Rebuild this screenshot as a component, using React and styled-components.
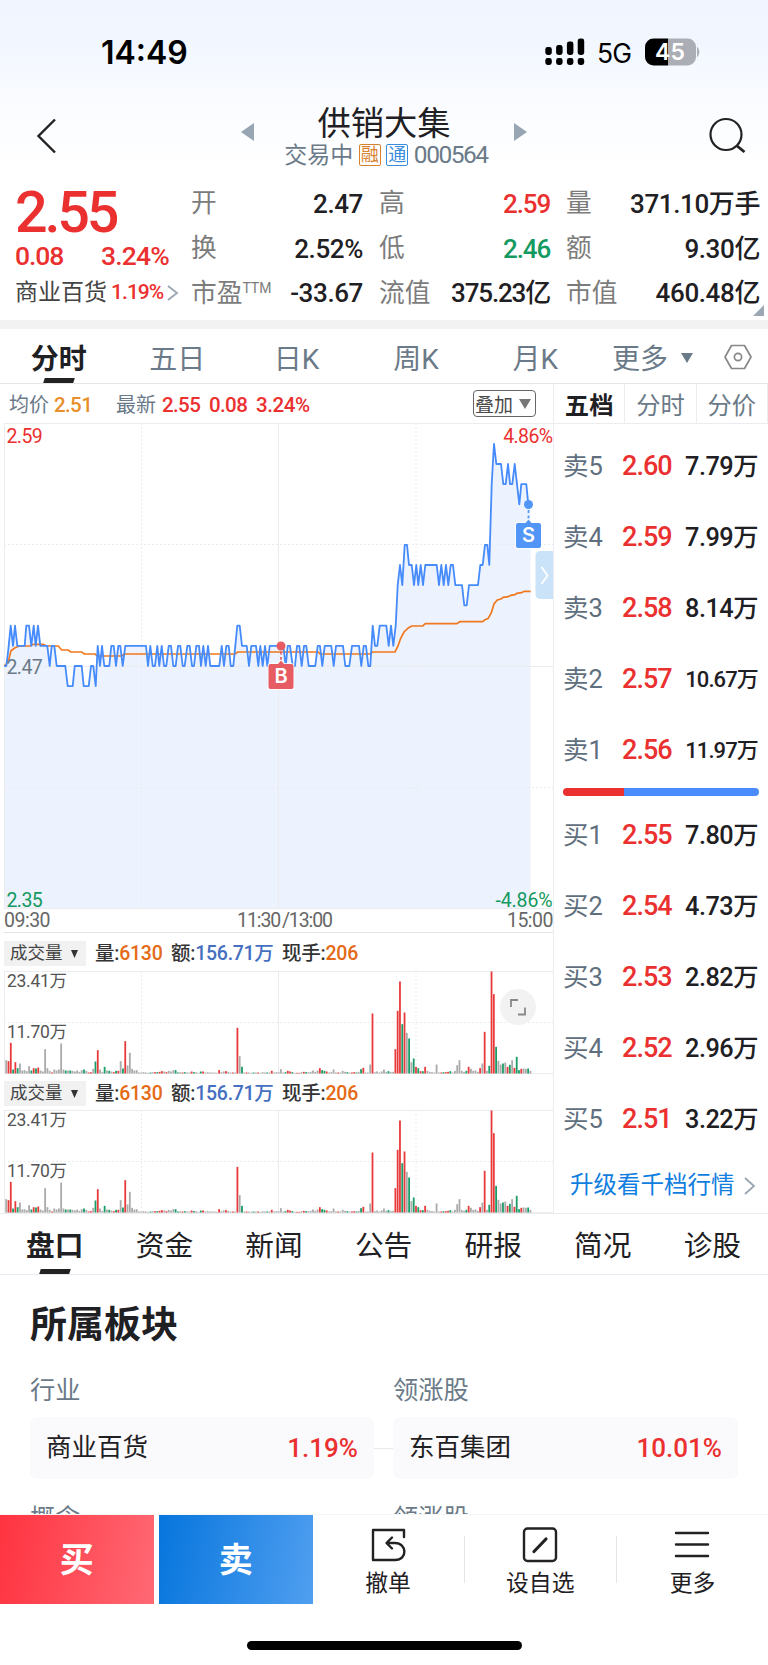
import React from 'react';
import styled, { createGlobalStyle } from 'styled-components';

const Global = createGlobalStyle`
  * { box-sizing: border-box; }
  body { margin: 0; background: #fff; }
`;

const RED = '#eb3030';
const GREEN = '#149a60';
const INK = '#1f2023';
const SLATE = '#6b7a88';
const GRAY = '#7c7c7c';
const LINE = '#eaecef';

const Screen = styled.div`
  width: 768px;
  height: 1665px;
  overflow: hidden;
  display: flex;
  flex-direction: column;
  background: #fff;
  color: ${INK};
  font-family: Roboto, 'Noto Sans CJK SC', sans-serif;
  white-space: nowrap;
`;

const Text = styled.span`
  font-size: ${(p) => p.$size || 24}px;
  font-weight: ${(p) => p.$weight || 400};
  color: ${(p) => p.$color || INK};
  letter-spacing: ${(p) => p.$ls ?? 0}em;
  line-height: 1;
`;

const TopArea = styled.header`
  height: 175px;
  background: linear-gradient(#f0f5ff 0, #f1f6ff 35px, #f9fbff 95px, #fff 170px);
`;

const StatusBar = styled.div`
  height: 100px;
  padding: 4px 66px 0 101px;
  display: flex;
  align-items: center;
  justify-content: space-between;
  font-family: Inter, sans-serif;
  color: #000;
`;

const Clock = styled.span`
  font-size: 32px;
  font-weight: 600;
  letter-spacing: 0;
  margin-top: 1px;
`;

const StatusIcons = styled.div`
  display: flex;
  align-items: center;
`;

const Network = styled.span`
  font-size: 26.5px;
  letter-spacing: -1px;
  margin: 2px 14px 0 12px;
`;

const NavBar = styled.div`
  height: 75px;
  display: flex;
  justify-content: space-between;
  padding: 0 22px 0 36px;
`;

const NavIcon = styled.svg`
  margin-top: 17px;
`;

const TitleGroup = styled.div`
  display: flex;
  gap: 28px;
  margin-left: 1px;
`;

const TitleColumn = styled.div`
  width: 204px;
  display: flex;
  flex-direction: column;
  align-items: center;
`;

const StockName = styled.h1`
  margin: 6px 0 0;
  font-size: 33.3px;
  line-height: 36px;
  font-weight: 400;
`;

const StockMeta = styled.div`
  display: flex;
  align-items: center;
  height: 26px;
  margin-left: 4px;
  gap: 5.5px;
`;

const Badge = styled.span`
  width: 22px;
  height: 22px;
  border: 1px solid ${(p) => p.$color};
  border-radius: 2px;
  background: #fff;
  color: ${(p) => p.$color};
  font-size: 18px;
  line-height: 19px;
  display: flex;
  justify-content: center;
`;

const Quote = styled.section`
  height: 145px;
  padding: 7px 8px 0 15px;
  display: flex;
  position: relative;
`;

const QuoteMain = styled.div`
  width: 176px;
`;

const BigPrice = styled.div`
  height: 61px;
  line-height: 61px;
  font-size: 57.5px;
  font-weight: 500;
  letter-spacing: -0.055em;
  color: ${RED};
`;

const ChangeRow = styled.div`
  width: 154px;
  height: 27px;
  display: flex;
  justify-content: space-between;
  align-items: center;
`;

const SectorRow = styled.div`
  height: 45px;
  display: flex;
  align-items: center;
  gap: 4px;
`;

const StatColumn = styled.dl`
  margin: 0 ${(p) => p.$gap || 0}px 0 0;
  width: ${(p) => p.$width}px;
`;

const Stat = styled.div`
  height: 44.6px;
  display: flex;
  align-items: center;
  justify-content: space-between;
`;

const StatLabel = styled(Text).attrs({ as: 'dt', $size: 25.7, $color: GRAY })``;

const StatValue = styled(Text).attrs({ as: 'dd', $size: 26, $weight: 500 })`
  margin: 0;
`;

const Sup = styled.sup`
  font-size: 14px;
  line-height: 0;
  vertical-align: 9px;
`;

const Corner = styled.i`
  position: absolute;
  right: 4px;
  bottom: 4px;
  border-left: 11px solid transparent;
  border-bottom: 11px solid #9ba7b5;
`;

const Band = styled.div`
  height: 9px;
  background: #f2f2f3;
`;

const PeriodTabs = styled.nav`
  height: 55px;
  border-bottom: 1px solid #e4e7ea;
  display: flex;
`;

const PeriodTab = styled.div`
  flex: none;
  width: ${(p) => p.$width || 119.4}px;
  height: 54px;
  padding-top: 1px;
  display: flex;
  justify-content: center;
  align-items: center;
  gap: 13px;
  position: relative;
  font-size: 28px;
  font-weight: ${(p) => (p.$active ? 700 : 400)};
  color: ${(p) => (p.$active ? INK : SLATE)};
`;

const Underline = styled.i`
  position: absolute;
  left: 50%;
  bottom: 0;
  width: 30px;
  height: 5px;
  margin-left: -15px;
  background: #222;
  transform: skewX(-18deg);
`;

const Main = styled.div`
  height: 830px;
  display: flex;
  border-bottom: 1px solid ${LINE};
`;

const ChartColumn = styled.div`
  width: 553px;
`;

const ChartHead = styled.div`
  height: 39px;
  padding: 3px 17px 0 9px;
  display: flex;
  align-items: center;
`;

const Overlay = styled.button`
  width: 63px;
  height: 27px;
  margin: -3px 0 0 auto;
  padding: 0 4px 0 1px;
  display: flex;
  align-items: center;
  justify-content: space-between;
  background: #fff;
  border: 1.5px solid #666;
  border-radius: 4px;
  color: #4a4a4a;
  font: 19px Roboto, 'Noto Sans CJK SC', sans-serif;
`;

const Drawing = styled.svg`
  display: block;
  overflow: visible;
  font-family: Roboto, 'Noto Sans CJK SC', sans-serif;
`;

const TimeAxis = styled.div`
  height: 24px;
  margin-left: 4px;
  border-bottom: 1px solid #e4e4e4;
  display: flex;
  justify-content: space-between;
  align-items: center;
  font-size: 19.5px;
  letter-spacing: -0.5px;
  line-height: 1;
  padding-top: 1px;
  color: #666;
`;

const MidTime = styled.span`
  letter-spacing: -1.1px;
  word-spacing: -2px;
  margin-left: 12px;
`;

const VolumeHead = styled.div`
  height: ${(p) => p.$height}px;
  padding: 3px 0 0 4px;
  display: flex;
  align-items: center;
  font-size: 19.5px;
  line-height: 1;
  font-weight: 500;
  color: #333;
`;

const IndicatorPick = styled.div`
  width: 82px;
  height: 25px;
  margin-right: 9px;
  padding: 0 8px 0 6px;
  background: #f1f1f1;
  display: flex;
  align-items: center;
  justify-content: space-between;
  font-size: 17.5px;
  font-weight: 400;
  color: #444;
`;

const Metric = styled.span`
  width: ${(p) => p.$width}px;
  letter-spacing: -0.01em;
`;

const Hue = styled.b`
  font-weight: 500;
  letter-spacing: -0.015em;
  color: ${(p) => p.$color};
`;

const VolumeWrap = styled.div`
  position: relative;
`;

const ExpandButton = styled.div`
  position: absolute;
  left: 500px;
  top: 18px;
  width: 36px;
  height: 36px;
  border-radius: 50%;
  background: #f2f2f2;
`;

const Book = styled.aside`
  width: 215px;
  border-left: 1px solid ${LINE};
`;

const BookTabs = styled.div`
  height: 40px;
  display: flex;
  border-bottom: 1px solid ${LINE};
`;

const BookTab = styled.div`
  flex: 1;
  border-right: 1px solid ${LINE};
  font-size: 24.3px;
  line-height: 43px;
  height: 39px;
  text-align: center;
  font-weight: ${(p) => (p.$active ? 700 : 400)};
  color: ${(p) => (p.$active ? INK : SLATE)};
`;

const BookSide = styled.div`
  padding: ${(p) => p.$top}px 10px 0 9px;
`;

const BookRow = styled.div`
  height: 71px;
  display: flex;
  align-items: center;
`;

const BookLabel = styled(Text)`
  width: 59px;
`;

const BookPrice = styled(Text)`
  flex: 1;
`;

const Ratio = styled.div`
  height: 8px;
  margin: 2px 9px 0 9px;
  border-radius: 4px;
  background: linear-gradient(90deg, ${RED} 61.5px, #4c8bfc 61.5px);
`;

const BookLink = styled.div`
  height: 60px;
  padding: 2px 12px 0 16px;
  display: flex;
  align-items: center;
  justify-content: space-between;
`;

const InfoTabs = styled.nav`
  height: 61px;
  display: flex;
  border-bottom: 1px solid #e6e9f1;
`;

const InfoTab = styled.div`
  width: 109.6px;
  height: 60px;
  line-height: 64px;
  position: relative;
  text-align: center;
  font-size: 28.7px;
  font-weight: ${(p) => (p.$active ? 700 : 400)};
`;

const Sector = styled.section`
  flex: 1;
  min-height: 0;
  overflow: hidden;
  padding: 32px 30px 0;
`;

const SectorTitle = styled.h2`
  margin: 0;
  font-size: 37px;
  line-height: 38px;
  font-weight: 700;
`;

const SectorGrid = styled.div`
  display: grid;
  grid-template-columns: 344px 1fr 345px;
  align-items: center;
`;

const Field = styled.div`
  height: ${(p) => p.$height || 36}px;
  margin-top: ${(p) => p.$top || 0}px;
  line-height: 36px;
  font-size: 25.3px;
  color: ${SLATE};
`;

const Card = styled.div`
  height: 62px;
  padding: 0 16px;
  border-radius: 7px;
  background: #fafafc;
  display: flex;
  align-items: center;
  justify-content: space-between;
`;

const Connector = styled.i`
  height: 1px;
  background: #e9e9ea;
`;

const ActionBar = styled.footer`
  height: 151px;
  border-top: 1px solid #f5f5f6;
  display: flex;
  flex-direction: column;
  align-items: center;
`;

const Actions = styled.div`
  width: 768px;
  height: 89px;
  display: flex;
  align-items: center;
`;

const Trade = styled.button`
  width: 153.5px;
  height: 89px;
  margin-right: ${(p) => p.$gap || 0}px;
  padding: 0 0 5px;
  border: 0;
  background: ${(p) => p.$fill};
  color: #fff;
  font: 700 34px 'Noto Sans CJK SC', sans-serif;
`;

const Tool = styled.div`
  flex: 1;
  height: 89px;
  padding-top: 10px;
  display: flex;
  flex-direction: column;
  align-items: center;
  font-size: 22.8px;
  line-height: 30px;
`;

const ToolIcon = styled.svg`
  display: block;
  margin-bottom: 4px;
`;

const Divider = styled.i`
  width: 1px;
  height: 47px;
  background: #e5e5e6;
`;

const HomeBar = styled.div`
  width: 275px;
  height: 9px;
  margin-top: 37px;
  border-radius: 5px;
  background: #000;
`;

/* Price steps: x in thirds of a pixel, level in cents above the previous close. */
const PRICE = [
  13,0,19,0,25,0.8,32,2,39,1,45,2,52,1,74,1,79,2,87,2,94,1,101,2,107,1,114,2,121,1,142,1,149,0,155,1,163,1,170,0,
  196,0,203,-1,218,-1,224,0,245,0,251,-1,266,-1,273,0,280,0,287,-1,293,1,300,0,306,1,313,0,328,0,334,1,341,1,348,0,
  355,1,361,1,368,0,376,1,438,1,444,0,451,1,458,0,465,0,472,1,478,0,485,1,492,0,499,0,506,1,513,1,520,0,527,0,534,1,
  541,1,548,0,554,0,562,1,569,1,576,0,582,0,589,1,597,1,603,0,610,1,617,0,624,1,631,0,658,0,665,1,672,0,679,1,686,1,
  692,0,700,0,706,1,712,2,719,2,726,1,740,1,747,0,754,1,768,1,775,0,781,1,788,0,795,1,802,0,809,1,850,1,857,0,863,1,
  870,1,878,0,885,0,891,1,898,1,905,0,912,1,919,1,926,0,946,0,953,1,960,1,967,0,974,1,994,1,1001,0,1008,1,1029,1,
  1036,0,1048,0,1056,1,1077,1,1084,0,1091,1,1098,1,1105,0,1111,0,1118,2,1125,1,1132,1,1139,2,1159,2,1166,1,1173,2,
  1180,1,1187,2,1193,4,1200,5,1207,4,1214,6,1221,6,1227,5,1235,5,1242,4,1249,5,1255,4,1262,5,1269,4,1276,5,1310,5,
  1317,4,1324,5,1331,4,1338,5,1345,4,1352,5,1359,5,1366,4,1386,4,1393,3,1400,3,1407,4,1434,4,1441,5,1448,5,1455,6,
  1462,6,1468,5,1475,9,1482,11,1489,10,1503,10,1510,9,1517,9,1524,10,1530,9,1537,9,1544,10,1551,9,1558,8,1564,9,
  1579,9,1585,8,
];

const AVERAGE = [
  13,858,19,852,26,840,33,812,45,803,58,798,90,798,100,793,130,793,140,798,175,798,185,810,205,810,212,816,245,816,
  253,822,285,822,292,828,365,828,372,822,705,822,713,816,955,816,960,822,1110,822,1118,816,1185,816,1193,800,
  1202,775,1212,756,1225,744,1235,738,1268,738,1276,731,1370,731,1380,725,1448,725,1455,719,1465,715,1474,698,
  1482,672,1492,660,1503,657,1510,652,1525,650,1532,646,1545,644,1550,640,1565,638,1572,634,1592,634,
];

/* One bar per minute: n = flat, r = up, g = down, followed by the height. */
const VOLUME = (
  'n40 r37 r92 g12 r34 g16 n30 n9 n10 n7 n22 g9 r16 g15 r18 n9 n6 n73 n16 n8 r3 n12 n9 n12 n90 n12 g9 n9 g9 n8 ' +
  'n6 n9 n5 n10 g12 n8 r3 r4 n14 g36 r70 n12 n5 g20 n9 g8 n6 r4 g8 r8 n37 g15 r97 n24 n62 n14 n9 n10 n3 n3 ' +
  'n4 n3 n2 g3 n4 r4 g4 r5 r7 n6 r4 n8 n6 n10 g10 g3 n4 r3 g4 n3 n3 r6 g4 n4 n2 g6 r6 n3 n4 n3 ' +
  'n3 n3 n2 r10 n4 n6 r7 n5 n3 r3 n3 r137 n52 g20 n3 r3 n3 n2 g3 n3 r3 n2 n4 n3 g3 n3 r8 n3 n4 n4 ' +
  'n13 n3 g4 r8 r6 g4 n2 r2 r2 n4 r5 g4 n4 n5 n9 n5 n9 r16 g10 g8 r6 n3 n4 n12 n3 r3 n3 n8 n5 g4 ' +
  'n3 r3 r4 g3 n5 g13 r17 n3 n3 n27 r180 n4 n6 n3 n6 n12 n5 g7 n4 n5 r73 r188 r276 g148 r183 n122 g105 n34 g45 r20 ' +
  'g16 r7 g7 r20 n8 n5 n4 n3 n27 n3 r3 g4 r4 r5 g7 n3 n8 n25 n40 n8 n5 g8 r20 n14 n8 n9 n5 r16 n30 r125 ' +
  'n8 g23 r306 r238 g80 n38 n27 g30 n33 r20 g26 n40 r17 g50 g10 r14 n15 n14 g15 n8'
).split(' ');

const BAR_FILL = { n: '#aaaaaa', r: '#e83a3a', g: '#1a9c66' };

const toPath = (data, toY) => {
  let d = '';
  for (let i = 0; i < data.length; i += 2) {
    d += `${i ? 'L' : 'M'}${(data[i] / 3).toFixed(1)} ${toY(data[i + 1]).toFixed(1)}`;
  }
  return d;
};

const Grid = ({ height, rows }) => (
  <g fill="none" stroke="#ececee" strokeWidth="1">
    <path d={`M4 .5H553M4.5 0V${height}M278.5 0V${height}`} />
    <path d={`M141.5 0V${height}M416 0V${height}`} strokeDasharray="2 2" />
    {rows.map(([y, dashed]) => (
      <path key={y} d={`M4 ${y}H553`} strokeDasharray={dashed ? '2 2' : undefined} />
    ))}
  </g>
);

const Marker = ({ x, y, boxY, color, letter }) => (
  <g>
    <path d={`M${x} ${y}V${boxY}`} stroke={color} strokeWidth="1.7" strokeDasharray="3 2.5" />
    <circle cx={x} cy={y} r="4.5" fill={color} />
    <path
      d={`M${x - 10.5} ${boxY}H${x - 3}L${x} ${boxY - 3.5}L${x + 3} ${boxY}H${x + 10.5}q2 0 2 2V${boxY + 23}q0 2-2 2H${x - 10.5}q-2 0-2-2V${boxY + 2}q0-2 2-2z`}
      fill={color}
      stroke="#fff"
      strokeWidth="1.6"
      paintOrder="stroke"
    />
    <text x={x} y={boxY + 19} fontFamily="Inter, sans-serif" fontSize="20" fontWeight="600" fill="#fff" textAnchor="middle">{letter}</text>
  </g>
);

const PriceChart = () => {
  const line = toPath(PRICE, (v) => 243 - v * 20.2);
  const average = toPath(AVERAGE, (v) => v / 3 - 43);
  return (
    <Drawing width="553" height="486" viewBox="0 0 553 486">
      <path d={`${line}L530.5 81V486H4.3Z`} fill="#ecf2fe" />
      <Grid height={486} rows={[[121.5, true], [243.5, false], [364.5, true], [485.5, false]]} />
      <path d={average} fill="none" stroke="#f0781e" strokeWidth="1.7" />
      <path d={line} fill="none" stroke="#458bfb" strokeWidth="1.8" strokeLinejoin="round" />
      <Marker x={281} y={223} boxY={241} color="#e65c62" letter="B" />
      <Marker x={528.5} y={81.5} boxY={100} color="#5195f6" letter="S" />
      <g fontSize="19.5" letterSpacing="-.6">
        <text x="6.500" y="20" fill={RED}>2.59</text>
        <text x="552.500" y="20" fill={RED} textAnchor="end">4.86%</text>
        <text x="6.500" y="251" fill={SLATE}>2.47</text>
        <text x="6.500" y="484" fill={GREEN}>2.35</text>
        <text x="552.500" y="484" fill={GREEN} textAnchor="end" letterSpacing="-.1">-4.86%</text>
      </g>
      <path d="M553 128H540.500q-5 0-5 5V171q0 5 5 5H553Z" fill="#cae3f8" />
      <path d="M541.500 144l6 8.500-6 8.500" fill="none" stroke="#fff" strokeWidth="1.8" />
    </Drawing>
  );
};

const VolumeChart = () => (
  <Drawing width="553" height="103" viewBox="0 0 553 103">
    <Grid height={103} rows={[[51.5, true], [102.5, false]]} />
    {VOLUME.map((bar, i) => {
      const h = Number(bar.slice(1)) / 3;
      return (
        <rect key={i} x={5.3 + i * 2.2893} y={102.5 - h} width="1.8" height={h} fill={BAR_FILL[bar[0]]} />
      );
    })}
    <g fontSize="17.5" fill="#555" letterSpacing="-.3">
      <text x="7" y="16">23.41万</text>
      <text x="7" y="67">11.70万</text>
    </g>
  </Drawing>
);

const VolumePanel = ({ headHeight, expandable }) => (
  <>
    <VolumeHead $height={headHeight}>
      <IndicatorPick>
        成交量
        <svg width="7" height="8"><path d="M0 0H7L3.500 8z" fill="#333" /></svg>
      </IndicatorPick>
      <Metric $width={76}>量:<Hue $color="#e46a16">6130</Hue></Metric>
      <Metric $width={111}>额:<Hue $color="#456fc0">156.71万</Hue></Metric>
      <Metric $width={90}>现手:<Hue $color="#e46a16">206</Hue></Metric>
    </VolumeHead>
    <VolumeWrap>
      <VolumeChart />
      {expandable && (
        <ExpandButton>
          <svg width="36" height="36" fill="none" stroke="#888" strokeWidth="1.8">
            <path d="M11 18V11H18M25 18.500V25.500H18" />
          </svg>
        </ExpandButton>
      )}
    </VolumeWrap>
  </>
);

const Chevron = ({ w, h }) => (
  <svg width={w + 2} height={h + 2} fill="none" stroke="#9aa5b1" strokeWidth="1.8">
    <path d={`M1 1L${w} ${h / 2 + 1}L1 ${h + 1}`} />
  </svg>
);

const STATS = [
  { width: 172, gap: 16, ls: -0.015, rows: [['开', '2.47'], ['换', '2.52%'], ['市盈', '-33.67', INK, 'TTM']] },
  { width: 171, gap: 16, ls: -0.045, rows: [['高', '2.59', RED], ['低', '2.46', GREEN], ['流值', '375.23亿']] },
  { width: 194, ls: -0.015, rows: [['量', '371.10万手'], ['额', '9.30亿'], ['市值', '460.48亿']] },
];

const SELLS = [['卖5', '2.60', '7.79万'], ['卖4', '2.59', '7.99万'], ['卖3', '2.58', '8.14万'], ['卖2', '2.57', '10.67万'], ['卖1', '2.56', '11.97万']];
const BUYS = [['买1', '2.55', '7.80万'], ['买2', '2.54', '4.73万'], ['买3', '2.53', '2.82万'], ['买4', '2.52', '2.96万'], ['买5', '2.51', '3.22万']];

const Orders = ({ rows }) =>
  rows.map(([label, price, amount]) => (
    <BookRow key={label}>
      <BookLabel $size={25.5} $color="#5f6f7e">{label}</BookLabel>
      <BookPrice $size={27} $weight={500} $color={RED} $ls={-0.035}>{price}</BookPrice>
      <Text $size={amount.length > 5 ? 22 : 25.3} $weight={500} $ls={amount.length > 5 ? -0.04 : -0.02}>{amount}</Text>
    </BookRow>
  ));

export default function App() {
  return (
    <Screen>
      <Global />
      <TopArea>
        <StatusBar>
          <Clock>14:49</Clock>
          <StatusIcons>
            <svg width="40" height="28">
              {[9, 7, 3.5, 0.5].map((top, i) => (
                <g key={top}>
                  <rect x={0.3 + i * 10.8} y={top} width="6.5" height={17 - top} rx="2.4" />
                  <rect x={0.3 + i * 10.8} y="20" width="6.5" height="7" rx="2.4" />
                </g>
              ))}
            </svg>
            <Network>5G</Network>
            <svg width="57" height="28">
              <defs>
                <clipPath id="cell"><rect y=".5" width="51" height="27" rx="8.500" /></clipPath>
              </defs>
              <g clipPath="url(#cell)">
                <path d="M0 0H23V28H0z" />
                <path d="M23 0H51V28H23z" fill="#abaeb4" />
              </g>
              <path d="M52.500 9.500q3 4.500 0 9z" fill="#abaeb4" stroke="#abaeb4" />
              <text x="25" y="22" fontSize="23" fontWeight="600" fill="#fff" textAnchor="middle">45</text>
            </svg>
          </StatusIcons>
        </StatusBar>
        <NavBar>
          <NavIcon width="22" height="38" fill="none" stroke="#222" strokeWidth="2.4">
            <path d="M19 2.500L2.500 19L19 35.500" />
          </NavIcon>
          <TitleGroup>
            <NavIcon width="14" height="36"><path d="M14 6V24L1 15z" fill="#98a5b3" /></NavIcon>
            <TitleColumn>
              <StockName>供销大集</StockName>
              <StockMeta>
                <Text $size={23} $color={SLATE}>交易中</Text>
                <Badge $color="#d8812e">融</Badge>
                <Badge $color="#3a8ddb">通</Badge>
                <Text $size={24.5} $color={SLATE} $ls={-0.06}>000564</Text>
              </StockMeta>
            </TitleColumn>
            <NavIcon width="14" height="36"><path d="M0 6V24L13 15z" fill="#98a5b3" /></NavIcon>
          </TitleGroup>
          <NavIcon width="37" height="38" fill="none" stroke="#222" strokeWidth="2.2">
            <circle cx="17" cy="17.500" r="15.500" />
            <path d="M27.500 28.500L35.500 35" strokeWidth="2.800" />
          </NavIcon>
        </NavBar>
      </TopArea>

      <Quote>
        <QuoteMain>
          <BigPrice>2.55</BigPrice>
          <ChangeRow>
            <Text $size={26.5} $weight={500} $color={RED} $ls={-0.04}>0.08</Text>
            <Text $size={26.5} $weight={500} $color={RED} $ls={-0.03}>3.24%</Text>
          </ChangeRow>
          <SectorRow>
            <Text $size={23} $color="#444">商业百货</Text>
            <Text $size={21} $weight={500} $color={RED} $ls={-0.045}>1.19%</Text>
            <Chevron w={10} h={14} />
          </SectorRow>
        </QuoteMain>
        {STATS.map((column) => (
          <StatColumn key={column.width} $width={column.width} $gap={column.gap}>
            {column.rows.map(([label, value, color, sup]) => (
              <Stat key={label}>
                <StatLabel>{label}{sup && <Sup>{sup}</Sup>}</StatLabel>
                <StatValue $color={color} $ls={column.ls}>{value}</StatValue>
              </Stat>
            ))}
          </StatColumn>
        ))}
        <Corner />
      </Quote>
      <Band />

      <PeriodTabs>
        {['分时', '五日', '日K', '周K', '月K'].map((name, i) => (
          <PeriodTab key={name} $active={i === 0} $width={i === 0 ? 117.5 : undefined}>
            {name}
            {i === 0 && <Underline />}
          </PeriodTab>
        ))}
        <PeriodTab $width={115}>
          更多
          <svg width="12" height="12"><path d="M0 2H12L6 12z" fill={SLATE} /></svg>
        </PeriodTab>
        <PeriodTab $width={55}>
          <svg width="28" height="26" fill="none" stroke="#888" strokeWidth="1.7">
            <path d="M7.500 1.500H20.500L27 13L20.500 24.500H7.500L1 13Z" strokeLinejoin="round" />
            <circle cx="14" cy="13" r="3.600" />
          </svg>
        </PeriodTab>
      </PeriodTabs>

      <Main>
        <ChartColumn>
          <ChartHead>
            <Metric $width={45}><Text $size={20} $color={SLATE}>均价</Text></Metric>
            <Metric $width={62}><Text $size={20.5} $weight={500} $color="#e88f2b" $ls={-0.03}>2.51</Text></Metric>
            <Metric $width={46}><Text $size={20} $color={SLATE}>最新</Text></Metric>
            <Metric $width={47}><Text $size={20.5} $weight={500} $color={RED} $ls={-0.03}>2.55</Text></Metric>
            <Metric $width={47}><Text $size={20.5} $weight={500} $color={RED} $ls={-0.03}>0.08</Text></Metric>
            <Text $size={20.5} $weight={500} $color={RED} $ls={-0.02}>3.24%</Text>
            <Overlay>
              叠加
              <svg width="12" height="10"><path d="M0 0H12L6 10z" fill="#777" /></svg>
            </Overlay>
          </ChartHead>
          <PriceChart />
          <TimeAxis>
            <span>09:30</span>
            <MidTime>11:30 /13:00</MidTime>
            <span>15:00</span>
          </TimeAxis>
          <VolumePanel headHeight={38} expandable />
          <VolumePanel headHeight={36} />
        </ChartColumn>
        <Book>
          <BookTabs>
            <BookTab $active>五档</BookTab>
            <BookTab>分时</BookTab>
            <BookTab>分价</BookTab>
          </BookTabs>
          <BookSide $top={7}><Orders rows={SELLS} /></BookSide>
          <Ratio />
          <BookSide $top={4}><Orders rows={BUYS} /></BookSide>
          <BookLink>
            <Text $size={23.5} $color="#0f7ee0">升级看千档行情</Text>
            <Chevron w={10} h={16} />
          </BookLink>
        </Book>
      </Main>

      <InfoTabs>
        {['盘口', '资金', '新闻', '公告', '研报', '简况', '诊股'].map((name, i) => (
          <InfoTab key={name} $active={i === 0}>
            {name}
            {i === 0 && <Underline />}
          </InfoTab>
        ))}
      </InfoTabs>

      <Sector>
        <SectorTitle>所属板块</SectorTitle>
        <SectorGrid>
          <Field $top={28} $height={44}>行业</Field>
          <span />
          <Field $top={28} $height={44}>领涨股</Field>
          <Card>
            <Text $size={25.5}>商业百货</Text>
            <Text $size={26} $weight={500} $color={RED}>1.19%</Text>
          </Card>
          <Connector />
          <Card>
            <Text $size={25.5}>东百集团</Text>
            <Text $size={26} $weight={500} $color={RED}>10.01%</Text>
          </Card>
          <Field $top={22}>概念</Field>
          <span />
          <Field $top={22}>领涨股</Field>
        </SectorGrid>
      </Sector>

      <ActionBar>
        <Actions>
          <Trade $gap={5.5} $fill="linear-gradient(100deg, #ff3340, #ff6974)">买</Trade>
          <Trade $fill="linear-gradient(100deg, #0675dd, #509ff0)">卖</Trade>
          <Tool>
            <ToolIcon width="38" height="40" fill="none" stroke="#222" strokeWidth="2.4">
              <path d="M35 12V5H4V35H26C39 35 38 18 26 18H18M23 12.500L17.500 18L23 23.500" strokeLinejoin="round" strokeLinecap="round" />
            </ToolIcon>
            撤单
          </Tool>
          <Divider />
          <Tool>
            <ToolIcon width="38" height="40" fill="none" stroke="#222" strokeWidth="2.400">
              <rect x="3" y="3.500" width="32" height="32.500" rx="3.500" />
              <path d="M13 26.500L25 14" strokeWidth="3.200" strokeLinecap="round" />
            </ToolIcon>
            设自选
          </Tool>
          <Divider />
          <Tool>
            <ToolIcon width="38" height="40" fill="none" stroke="#222" strokeWidth="2.400">
              <path d="M3 8H35M3 19.500H35M3 31H35" strokeLinecap="round" />
            </ToolIcon>
            更多
          </Tool>
        </Actions>
        <HomeBar />
      </ActionBar>
    </Screen>
  );
}
